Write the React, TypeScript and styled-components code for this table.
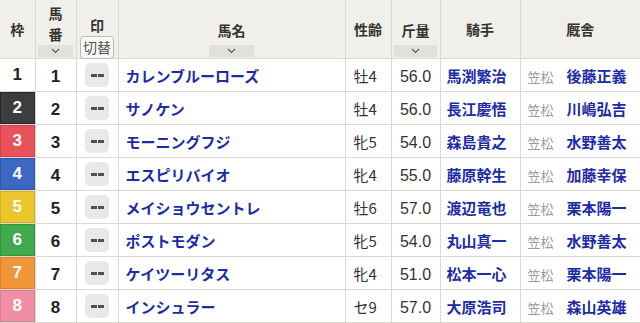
import React from "react";
import styled, { createGlobalStyle } from "styled-components";

const GlobalStyle = createGlobalStyle`
  html, body {
    margin: 0;
    padding: 0;
    background: #ffffff;
  }
  body {
    font-family: "Noto Sans CJK JP", "Noto Sans", sans-serif;
    color: #222;
  }
`;

type Entry = {
  frame: number;
  num: number;
  name: string;
  sexAge: string;
  weight: string;
  jockey: string;
  region: string;
  trainer: string;
};

const entries: Entry[] = [
  { frame: 1, num: 1, name: "カレンブルーローズ", sexAge: "牡4", weight: "56.0", jockey: "馬渕繁治", region: "笠松", trainer: "後藤正義" },
  { frame: 2, num: 2, name: "サノケン", sexAge: "牡4", weight: "56.0", jockey: "長江慶悟", region: "笠松", trainer: "川嶋弘吉" },
  { frame: 3, num: 3, name: "モーニングフジ", sexAge: "牝5", weight: "54.0", jockey: "森島貴之", region: "笠松", trainer: "水野善太" },
  { frame: 4, num: 4, name: "エスピリバイオ", sexAge: "牝4", weight: "55.0", jockey: "藤原幹生", region: "笠松", trainer: "加藤幸保" },
  { frame: 5, num: 5, name: "メイショウセントレ", sexAge: "牡6", weight: "57.0", jockey: "渡辺竜也", region: "笠松", trainer: "栗本陽一" },
  { frame: 6, num: 6, name: "ポストモダン", sexAge: "牝5", weight: "54.0", jockey: "丸山真一", region: "笠松", trainer: "水野善太" },
  { frame: 7, num: 7, name: "ケイツーリタス", sexAge: "牝4", weight: "51.0", jockey: "松本一心", region: "笠松", trainer: "栗本陽一" },
  { frame: 8, num: 8, name: "インシュラー", sexAge: "セ9", weight: "57.0", jockey: "大原浩司", region: "笠松", trainer: "森山英雄" },
];

const frameColors: Record<number, { bg: string; fg: string; edge: string }> = {
  1: { bg: "#ffffff", fg: "#222222", edge: "transparent" },
  2: { bg: "#3d3d3d", fg: "#ffffff", edge: "#262626" },
  3: { bg: "#e9525b", fg: "#ffffff", edge: "#d4414a" },
  4: { bg: "#3b68c2", fg: "#ffffff", edge: "#2f58aa" },
  5: { bg: "#eac52c", fg: "#ffffff", edge: "#d6b11f" },
  6: { bg: "#40a94d", fg: "#ffffff", edge: "#339540" },
  7: { bg: "#f09538", fg: "#ffffff", edge: "#dc8229" },
  8: { bg: "#f08ea3", fg: "#ffffff", edge: "#de7b90" },
};

const Table = styled.table`
  width: 640px;
  border-collapse: collapse;
  table-layout: fixed;
`;

const HeadCell = styled.th`
  height: 58px;
  padding: 0;
  background: #f1efea;
  border: 1px solid #dcd9d2;
  border-top: none;
  color: #333;
  font-size: 14px;
  font-weight: bold;
  vertical-align: top;
  &:first-child {
    border-left: none;
  }
  &:last-child {
    border-right: none;
  }
`;

const HeadInner = styled.div<{ $offset?: number }>`
  height: 58px;
  box-sizing: border-box;
  padding-top: ${(p) => p.$offset ?? 0}px;
  display: flex;
  flex-direction: column;
  align-items: center;
`;

const HeadLabel = styled.div`
  flex: 1;
  display: flex;
  align-items: center;
  justify-content: center;
  line-height: 21px;
  text-align: center;
`;

const SortBar = styled.div<{ $w: number }>`
  width: ${(p) => p.$w}px;
  height: 12px;
  margin-bottom: 1px;
  background: #e2e0db;
  display: flex;
  align-items: center;
  justify-content: center;
`;

const MarkHead = styled.div`
  height: 58px;
  box-sizing: border-box;
  padding-top: 15px;
  display: flex;
  flex-direction: column;
  align-items: center;
`;

const SwitchButton = styled.div`
  width: 34px;
  height: 23px;
  box-sizing: border-box;
  margin: 0 0 2px;
  border: 1px solid #bdbab4;
  border-radius: 4px;
  background: #faf9f6;
  color: #555;
  font-size: 14px;
  font-weight: normal;
  line-height: 21px;
  text-align: center;
`;

const Row = styled.tr``;

const Cell = styled.td<{ $align?: string; $pad?: number }>`
  height: 32px;
  padding: 0 ${(p) => p.$pad ?? 0}px;
  border: 1px solid #dcd9d2;
  text-align: ${(p) => p.$align ?? "center"};
  vertical-align: middle;
  white-space: nowrap;
  overflow: hidden;
  &:first-child {
    border-left: none;
  }
  &:last-child {
    border-right: none;
  }
`;

const FrameCell = styled(Cell)<{ $bg: string; $fg: string; $edge: string }>`
  background: ${(p) => p.$bg};
  color: ${(p) => p.$fg};
  box-shadow: inset 0 0 0 1px ${(p) => p.$edge};
  font-family: "Liberation Sans", Arial, sans-serif;
  font-size: 17px;
  font-weight: bold;
`;

const NumText = styled.span`
  font-family: "Liberation Sans", Arial, sans-serif;
  font-size: 17px;
  font-weight: bold;
  color: #222;
`;

const MarkButton = styled.div`
  width: 24px;
  height: 24px;
  margin: 0 auto;
  border-radius: 5px;
  background: #e9e9e9;
  display: flex;
  align-items: center;
  justify-content: center;
  gap: 1px;
`;

const Dash = styled.span`
  display: block;
  flex: 0 0 auto;
  width: 6px;
  height: 3px;
  background: #505050;
`;

const LinkText = styled.span`
  color: #1c2ca6;
  font-size: 15px;
  font-weight: bold;
`;

const PlainText = styled.span`
  color: #333;
  font-size: 15px;
`;

const WeightText = styled.span`
  color: #333;
  font-family: "Liberation Sans", Arial, sans-serif;
  font-size: 16px;
`;

const Region = styled.span`
  color: #9a9a9a;
  font-size: 13px;
  margin-right: 13px;
`;

const Chevron = () => (
  <svg width="9" height="6" viewBox="0 0 9 6">
    <path d="M1 1 L4.5 4.5 L8 1" fill="none" stroke="#555" strokeWidth="1.1" />
  </svg>
);

export default function App() {
  return (
    <>
      <GlobalStyle />
      <Table>
        <colgroup>
          <col style={{ width: 35 }} />
          <col style={{ width: 41 }} />
          <col style={{ width: 42 }} />
          <col style={{ width: 227 }} />
          <col style={{ width: 46 }} />
          <col style={{ width: 49 }} />
          <col style={{ width: 80 }} />
          <col style={{ width: 120 }} />
        </colgroup>
        <thead>
          <tr>
            <HeadCell>
              <HeadInner>
                <HeadLabel>枠</HeadLabel>
              </HeadInner>
            </HeadCell>
            <HeadCell>
              <HeadInner $offset={2}>
                <HeadLabel>
                  馬<br />番
                </HeadLabel>
                <SortBar $w={35}>
                  <Chevron />
                </SortBar>
              </HeadInner>
            </HeadCell>
            <HeadCell>
              <MarkHead>
                <HeadLabel>印</HeadLabel>
                <SwitchButton>切替</SwitchButton>
              </MarkHead>
            </HeadCell>
            <HeadCell>
              <HeadInner $offset={16}>
                <HeadLabel>馬名</HeadLabel>
                <SortBar $w={45}>
                  <Chevron />
                </SortBar>
              </HeadInner>
            </HeadCell>
            <HeadCell>
              <HeadInner>
                <HeadLabel>性齢</HeadLabel>
              </HeadInner>
            </HeadCell>
            <HeadCell>
              <HeadInner $offset={16}>
                <HeadLabel>斤量</HeadLabel>
                <SortBar $w={43}>
                  <Chevron />
                </SortBar>
              </HeadInner>
            </HeadCell>
            <HeadCell>
              <HeadInner>
                <HeadLabel>騎手</HeadLabel>
              </HeadInner>
            </HeadCell>
            <HeadCell>
              <HeadInner>
                <HeadLabel>厩舎</HeadLabel>
              </HeadInner>
            </HeadCell>
          </tr>
        </thead>
        <tbody>
          {entries.map((e) => {
            const c = frameColors[e.frame];
            return (
              <Row key={e.num}>
                <FrameCell $bg={c.bg} $fg={c.fg} $edge={c.edge}>
                  {e.frame}
                </FrameCell>
                <Cell>
                  <NumText>{e.num}</NumText>
                </Cell>
                <Cell>
                  <MarkButton title="--">
                    <Dash />
                    <Dash />
                  </MarkButton>
                </Cell>
                <Cell $align="left" $pad={7}>
                  <LinkText>{e.name}</LinkText>
                </Cell>
                <Cell $align="left" $pad={8}>
                  <PlainText>{e.sexAge}</PlainText>
                </Cell>
                <Cell>
                  <WeightText>{e.weight}</WeightText>
                </Cell>
                <Cell $align="left" $pad={6}>
                  <LinkText>{e.jockey}</LinkText>
                </Cell>
                <Cell $align="left" $pad={7}>
                  <Region>{e.region}</Region>
                  <LinkText>{e.trainer}</LinkText>
                </Cell>
              </Row>
            );
          })}
        </tbody>
      </Table>
    </>
  );
}
